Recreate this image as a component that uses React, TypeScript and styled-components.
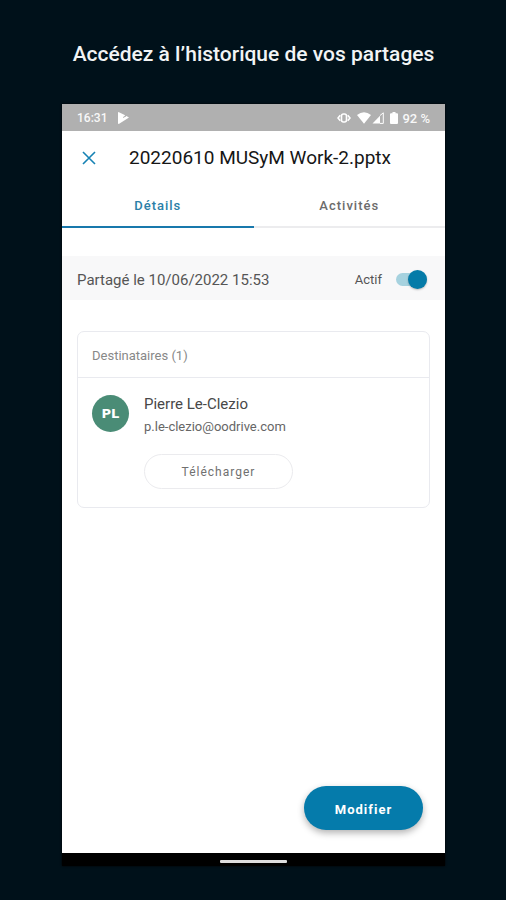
import React, { useState } from "react";
import styled, { createGlobalStyle } from "styled-components";

const GlobalStyle = createGlobalStyle`
  *, *::before, *::after { box-sizing: border-box; }
  body { margin: 0; background: #00111a; font-family: Roboto, "Liberation Sans", sans-serif; }
  button, input { font: inherit; }
  h1, h2, h3, p { margin: 0; font-weight: 400; }
`;

const Page = styled.main`
  display: flex;
  flex-direction: column;
  min-height: 100vh;
  padding: 40px 61px 34px 62px;
`;

const Headline = styled.h1`
  margin: 0 -40px 36px;
  color: #f2f4f5;
  font-size: 21px;
  line-height: 28px;
  font-weight: 500;
  text-align: center;
`;

const Phone = styled.section`
  flex: 1;
  display: flex;
  flex-direction: column;
  background: #fff;
  box-shadow: 0 0 2px #000;
`;

const StatusBar = styled.div`
  display: flex;
  align-items: center;
  height: 27px;
  padding: 1px 15px 0;
  background: #b0b0b0;
  color: #f8f8f8;
  font-size: 12px;
  font-weight: 500;
`;

const StatusIcons = styled.div`
  display: flex;
  align-items: center;
  margin-left: auto;
`;

const Icon = styled.svg<{ $gap?: number }>`
  display: block;
  flex: none;
  margin-left: ${(p) => p.$gap ?? 0}px;
`;

const BatteryLevel = styled.span`
  margin-left: 4px;
  font-size: 13px;
`;

const Toolbar = styled.header`
  display: flex;
  align-items: center;
  gap: 26px;
  height: 53px;
  padding: 0 12px;
`;

const CloseButton = styled.button`
  display: grid;
  place-items: center;
  width: 29px;
  height: 29px;
  padding: 0;
  border: 0;
  background: none;
  color: #1682b4;
`;

const FileName = styled.h2`
  color: #161616;
  font-size: 19px;
  line-height: 24px;
`;

const Tabs = styled.div`
  display: grid;
  grid-template-columns: 1fr 1fr;
`;

const Tab = styled.button<{ $active: boolean }>`
  height: 44px;
  padding: 0;
  border: 0;
  border-bottom: 2px solid ${(p) => (p.$active ? "#1878ac" : "#ececee")};
  background: none;
  color: ${(p) => (p.$active ? "#2b7fa8" : "#6c6c6c")};
  font-size: 13px;
  font-weight: 500;
  letter-spacing: 1px;
`;

const Content = styled.div`
  flex: 1;
  display: flex;
  flex-direction: column;
  padding-top: 28px;
`;

const ShareRow = styled.div`
  display: flex;
  align-items: center;
  height: 44px;
  padding: 3px 18px 0 15px;
  background: #f8f8f9;
  color: #555;
  font-size: 15px;
`;

const SwitchLabel = styled.label`
  display: flex;
  align-items: center;
  gap: 14px;
  margin-left: auto;
  font-size: 13px;
`;

const Switch = styled.input`
  appearance: none;
  display: flex;
  align-items: center;
  width: 31px;
  height: 13px;
  margin: 0;
  border-radius: 7px;
  background: #a6d2df;

  &::before {
    content: "";
    flex: none;
    width: 19px;
    height: 19px;
    border-radius: 50%;
    background: #8b9296;
    box-shadow: 0 1px 2px rgba(0, 0, 0, 0.25);
  }

  &:checked::before {
    margin-left: auto;
    background: #057ba8;
  }
`;

const Card = styled.section`
  margin: 31px 15px 0;
  border: 1px solid #e9eaef;
  border-radius: 7px;
`;

const CardTitle = styled.h3`
  padding: 14px 14px 11px;
  border-bottom: 1px solid #e9eaef;
  color: #888;
  font-size: 13px;
  line-height: 20px;
`;

const Recipient = styled.div`
  display: flex;
  gap: 15px;
  padding: 16px 14px 18px;
`;

const Avatar = styled.div`
  display: grid;
  place-items: center;
  flex: none;
  width: 37px;
  height: 37px;
  margin-top: 1px;
  border-radius: 50%;
  background: #4a8c76;
  color: #fff;
  font-family: "DejaVu Sans", sans-serif;
  font-size: 13px;
  line-height: 16px;
  font-weight: 700;
`;

const Name = styled.p`
  color: #484848;
  font-size: 15px;
  line-height: 20px;
`;

const Email = styled.p`
  margin-top: 3px;
  color: #666;
  font-size: 13px;
  line-height: 20px;
`;

const PillButton = styled.button`
  display: block;
  width: 149px;
  height: 35px;
  margin-top: 17px;
  padding: 0;
  border: 1px solid #ebebee;
  border-radius: 18px;
  background: #fff;
  color: #707070;
  font-size: 12px;
  letter-spacing: 1px;
`;

const PrimaryButton = styled.button`
  align-self: flex-end;
  width: 119px;
  height: 44px;
  margin: auto 22px 23px 0;
  padding: 2px 0 0;
  border: 0;
  border-radius: 22px;
  background: #057bab;
  box-shadow: 0 3px 7px rgba(0, 0, 0, 0.3);
  color: #fff;
  font-size: 13px;
  font-weight: 700;
  letter-spacing: 1px;
`;

const NavBar = styled.div`
  display: grid;
  place-items: center;
  height: 13px;
  padding-top: 3px;
  background: #000;
`;

const HomeHandle = styled.div`
  width: 67px;
  height: 3px;
  border-radius: 1px;
  background: #dedede;
`;

const tabNames = ["Détails", "Activités"];

export default function App() {
  const [active, setActive] = useState(0);
  const [enabled, setEnabled] = useState(true);

  return (
    <Page>
      <GlobalStyle />
      <Headline>Accédez à l’historique de vos partages</Headline>
      <Phone>
        <StatusBar>
          <span>16:31</span>
          <Icon $gap={11} width="11" height="12" viewBox="0 0 11 12" fill="#fff" aria-hidden="true">
            <path d="M0.5 0 7.2 3.2 5 5.6 8.4 4 11 5.6 0.8 12Q0 12 0 11.2V0.5Z" />
            <path d="M5 5.600 8 4" fill="none" stroke="#b0b0b0" strokeWidth="0.8" />
          </Icon>
          <StatusIcons>
            <Icon width="14" height="10" viewBox="0 0 14 10" fill="none" stroke="#fff" aria-hidden="true">
              <rect x="4.5" y="1" width="5" height="8" rx="2" strokeWidth="1.6" />
              <path d="M3.3 2.2 1 5 3.3 7.8M10.7 2.2 13 5 10.7 7.8" strokeWidth="1.6" />
            </Icon>
            <Icon $gap={6} width="14" height="12" viewBox="0 0 14 12" fill="#fff" aria-hidden="true">
              <path d="M0 3Q7-2.4 14 3L7 11.8Z" />
            </Icon>
            <Icon $gap={1} width="12" height="12" viewBox="0 0 12 12" aria-hidden="true">
              <path d="M0.5 11.5 8 3.8v7.7Z" fill="#fff" />
              <path d="M8 3.5 11.3 0.8v10.6H8" fill="none" stroke="#fff" />
            </Icon>
            <Icon $gap={6} width="8" height="12" viewBox="0 0 8 12" fill="#fff" aria-hidden="true">
              <path d="M2.5 0h3v1.3H7q1 0 1 1V11q0 1-1 1H1q-1 0-1-1V2.3q0-1 1-1h1.5Z" />
            </Icon>
            <BatteryLevel>92 %</BatteryLevel>
          </StatusIcons>
        </StatusBar>
        <Toolbar>
          <CloseButton type="button" aria-label="Fermer">
            <Icon width="14" height="14" viewBox="0 0 14 14" fill="none" stroke="currentColor" strokeWidth="1.6" aria-hidden="true">
              <path d="M1 1 13 13M13 1 1 13" />
            </Icon>
          </CloseButton>
          <FileName>20220610 MUSyM Work-2.pptx</FileName>
        </Toolbar>
        <Tabs role="tablist">
          {tabNames.map((name, i) => (
            <Tab
              key={name}
              type="button"
              role="tab"
              aria-selected={active === i}
              $active={active === i}
              onClick={() => setActive(i)}
            >
              {name}
            </Tab>
          ))}
        </Tabs>
        <Content>
          <ShareRow>
            <span>Partagé le 10/06/2022 15:53</span>
            <SwitchLabel>
              Actif
              <Switch
                type="checkbox"
                role="switch"
                checked={enabled}
                onChange={(e) => setEnabled(e.target.checked)}
              />
            </SwitchLabel>
          </ShareRow>
          <Card>
            <CardTitle>Destinataires (1)</CardTitle>
            <Recipient>
              <Avatar>PL</Avatar>
              <div>
                <Name>Pierre Le-Clezio</Name>
                <Email>p.le-clezio@oodrive.com</Email>
                <PillButton type="button">Télécharger</PillButton>
              </div>
            </Recipient>
          </Card>
          <PrimaryButton type="button">Modifier</PrimaryButton>
        </Content>
        <NavBar>
          <HomeHandle />
        </NavBar>
      </Phone>
    </Page>
  );
}
